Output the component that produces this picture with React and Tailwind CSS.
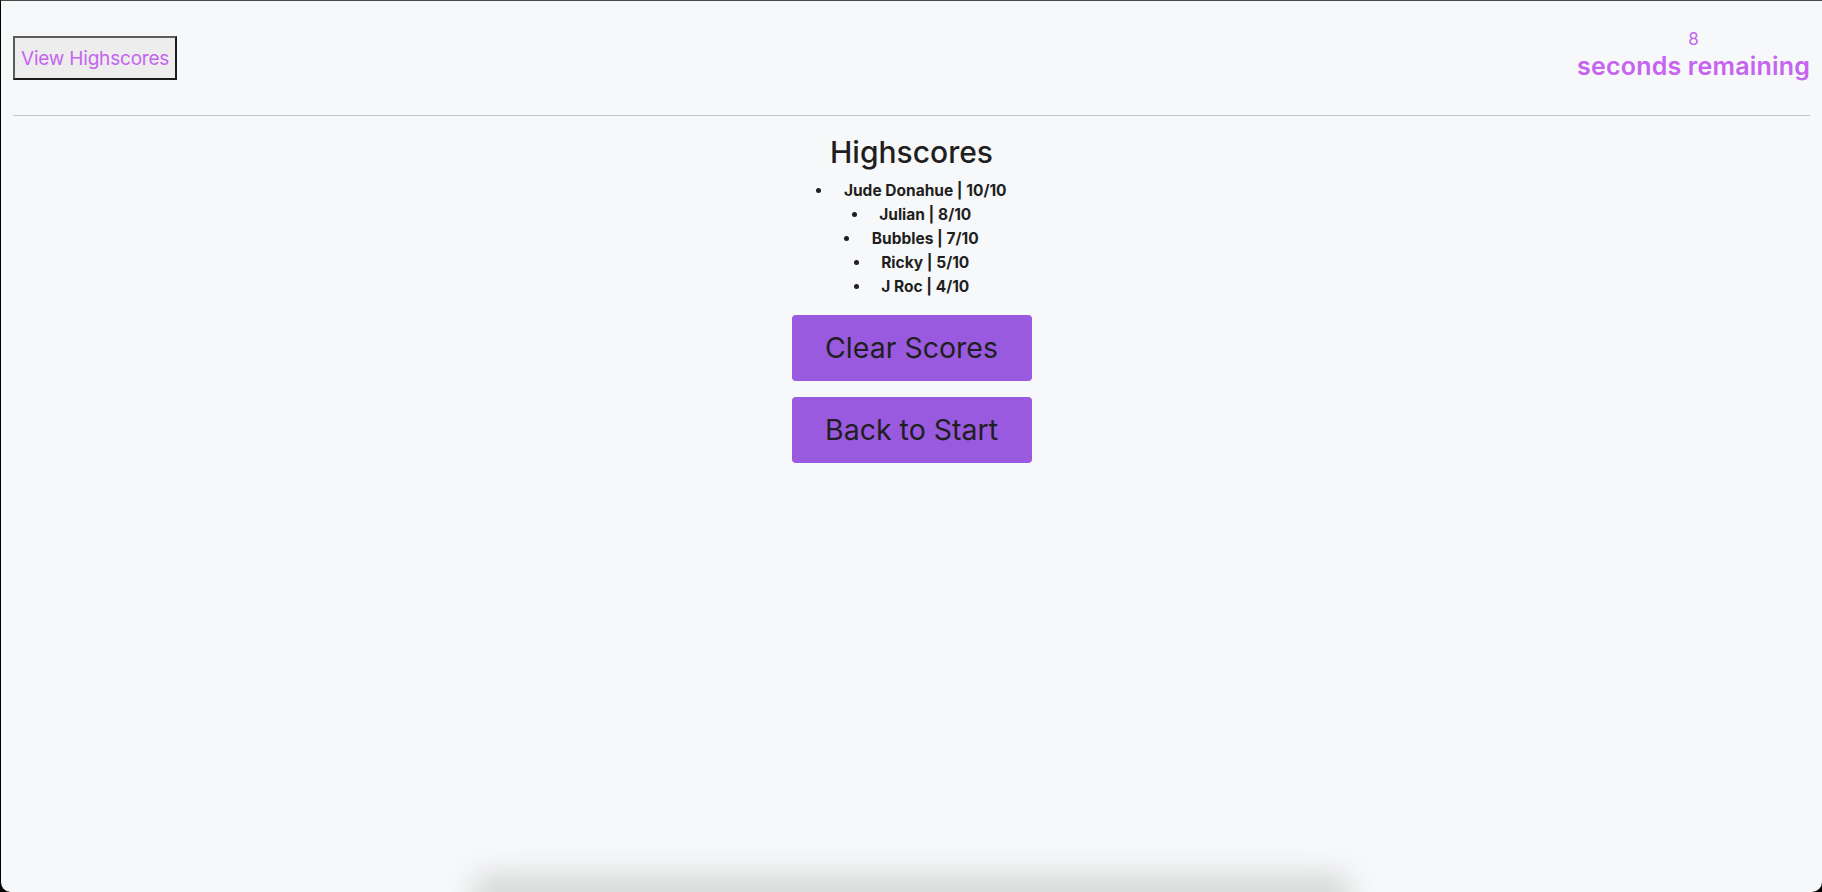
import React from 'react';

const scores = [
  { name: 'Jude Donahue', score: 10 },
  { name: 'Julian', score: 8 },
  { name: 'Bubbles', score: 7 },
  { name: 'Ricky', score: 5 },
  { name: 'J Roc', score: 4 },
];

export default function App() {
  return (
    <div className="w-full h-[892px] bg-black font-['Inter','Liberation_Sans',sans-serif]">
      <div className="relative h-full bg-[#f7f8fa] border-l border-l-black border-t border-t-[#4a4a4a] rounded-b-[10px] overflow-hidden">
        {/* Header */}
        <header className="flex justify-between items-start pl-[12px] pr-[12px]">
          <button className="mt-[35px] h-[44px] px-[6px] bg-[#ededed] border-2 border-t-[#5c5c5c] border-l-[#5c5c5c] border-b-[#1c1c1c] border-r-[#1c1c1c] text-[19px] tracking-[-0.2px] text-[#c565ef] leading-none">
            View Highscores
          </button>
          <div className="text-center text-[#c565ef] pt-[27px]">
            <div className="text-[17px] leading-[22px]">8</div>
            <div className="text-[25px] font-semibold tracking-[0.2px] leading-[32px]">seconds remaining</div>
          </div>
        </header>
        <hr className="mx-[12px] mt-[33px] border-t border-[#c4c4c6]" />

        {/* Highscores */}
        <main className="flex flex-col items-center pt-[19px]">
          <h1 className="text-[30px] font-medium text-[#1f1f21] leading-[34px]">Highscores</h1>
          <ul className="list-disc list-inside text-center mt-[10px] text-[15.5px] font-bold text-[#1f1f21] leading-[24px]">
            {scores.map((s) => (
              <li key={s.name}>
                <span className="pl-[6px]">{s.name} | {s.score}/10</span>
              </li>
            ))}
          </ul>
          <div className="flex flex-col gap-[16px] mt-[16px]">
            <button className="w-[240px] h-[66px] rounded-[4px] bg-[#9a5ae0] text-[28.5px] text-[#1f1f21]">
              Clear Scores
            </button>
            <button className="w-[240px] h-[66px] rounded-[4px] bg-[#9a5ae0] text-[28.5px] text-[#1f1f21]">
              Back to Start
            </button>
          </div>
        </main>

        {/* Dock shadow */}
        <div className="absolute left-[470px] right-[470px] bottom-[-22px] h-[40px] rounded-[30px] bg-[#d6d8d7] blur-[14px]" />
      </div>
    </div>
  );
}
